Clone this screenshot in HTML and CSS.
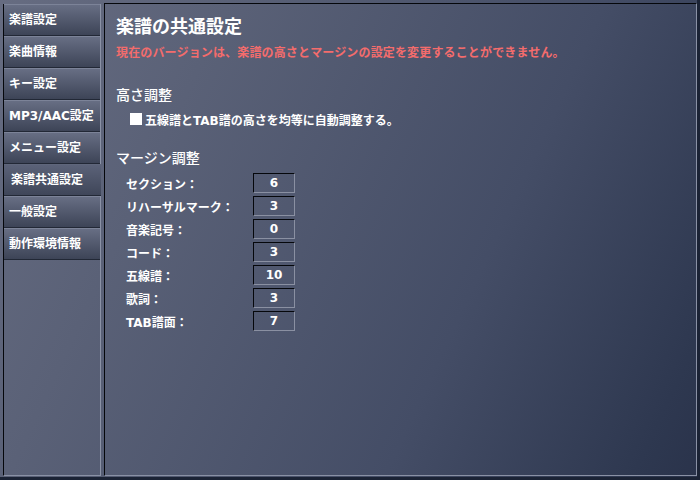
FILE: index.html
```html
<!DOCTYPE html>
<html lang="ja">
<head>
<meta charset="utf-8">
<link rel="stylesheet" href="styles.css">
</head>
<body>
<div class="app">
  <nav class="sidebar">
    <div class="tab">楽譜設定</div>
    <div class="tab">楽曲情報</div>
    <div class="tab">キー設定</div>
    <div class="tab">MP3/AAC設定</div>
    <div class="tab">メニュー設定</div>
    <div class="tab active">楽譜共通設定</div>
    <div class="tab">一般設定</div>
    <div class="tab">動作環境情報</div>
  </nav>
  <main class="content">
    <h1 class="title">楽譜の共通設定</h1>
    <p class="warn">現在のバージョンは、楽譜の高さとマージンの設定を変更することができません。</p>
    <h2 class="section">高さ調整</h2>
    <label class="check"><span class="box"></span><span class="check-text">五線譜とTAB譜の高さを均等に自動調整する。</span></label>
    <h2 class="section section2">マージン調整</h2>
    <div class="rows">
      <div class="row"><span class="label">セクション：</span><span class="field">6</span></div>
      <div class="row"><span class="label">リハーサルマーク：</span><span class="field">3</span></div>
      <div class="row"><span class="label">音楽記号：</span><span class="field">0</span></div>
      <div class="row"><span class="label">コード：</span><span class="field">3</span></div>
      <div class="row"><span class="label">五線譜：</span><span class="field">10</span></div>
      <div class="row"><span class="label">歌詞：</span><span class="field">3</span></div>
      <div class="row"><span class="label">TAB譜面：</span><span class="field">7</span></div>
    </div>
  </main>
</div>
</body>
</html>
```

FILE: styles.css
```css
html, body {
  margin: 0;
  padding: 0;
}
body {
  width: 700px;
  height: 480px;
  overflow: hidden;
  background: #1b2335;
  font-family: "DejaVu Sans", "Noto Sans CJK JP", sans-serif;
  color: #fff;
}
.app {
  width: 697px;
  height: 477px;
  display: flex;
  align-items: flex-start;
  background: linear-gradient(115deg, #666c81 0%, #5a6177 25%, #444d66 66%, #2e3850 93%, #2a334b 100%);
}
.sidebar {
  margin: 4px 0 0 3px;
  width: 96px;
  height: 471px;
  border-left: 1px solid #05070b;
  border-right: 1px solid #8a91a5;
  border-bottom: 1px solid #8a91a5;
  display: flex;
  flex-direction: column;
  flex: none;
}
.tab {
  height: 30px;
  line-height: 30px;
  border-top: 1px solid #7c8398;
  border-bottom: 1px solid #222836;
  background: linear-gradient(#676e84, #3d4457);
  padding-left: 5px;
  font-size: 12px;
  font-weight: bold;
  white-space: nowrap;
}
.tab.active {
  background: linear-gradient(#5b6278, #3f4659);
  border-top-color: #5f667b;
  padding-left: 7px;
  margin-right: -1px;
}
.content {
  margin: 3px 0 0 3px;
  width: 580px;
  height: 471px;
  border-top: 1px solid #05070b;
  border-left: 1px solid #05070b;
  border-right: 1px solid #8a91a5;
  border-bottom: 1px solid #8a91a5;
  padding-left: 11px;
  flex: none;
}
.title {
  margin: 11px 0 0;
  font-size: 18px;
  line-height: 24px;
  font-weight: bold;
}
.warn {
  margin: 6px 0 0;
  font-size: 12px;
  line-height: 16px;
  font-weight: bold;
  color: #f46c6c;
  letter-spacing: 0.15px;
  white-space: nowrap;
}
.section {
  margin: 24px 0 0;
  font-size: 14px;
  line-height: 20px;
  font-weight: 500;
}
.section2 {
  margin-top: 21px;
}
.check {
  margin-top: 6px;
  padding-left: 14px;
  display: flex;
  align-items: center;
  height: 16px;
  font-size: 12px;
  font-weight: bold;
}
.box {
  width: 12px;
  height: 12px;
  background: #fff;
  margin-right: 3px;
  flex: none;
}
.check-text {
  white-space: nowrap;
}
.rows {
  margin-top: 5px;
  padding-left: 10px;
  display: flex;
  flex-direction: column;
  gap: 3px;
}
.row {
  display: flex;
  align-items: center;
  height: 20px;
  font-size: 12px;
  font-weight: bold;
}
.label {
  width: 127px;
  flex: none;
}
.field {
  width: 40px;
  height: 18px;
  line-height: 18px;
  text-align: center;
  border-top: 1px solid #05070b;
  border-left: 1px solid #05070b;
  border-right: 1px solid #8a90a2;
  border-bottom: 1px solid #8a90a2;
  flex: none;
}
```
